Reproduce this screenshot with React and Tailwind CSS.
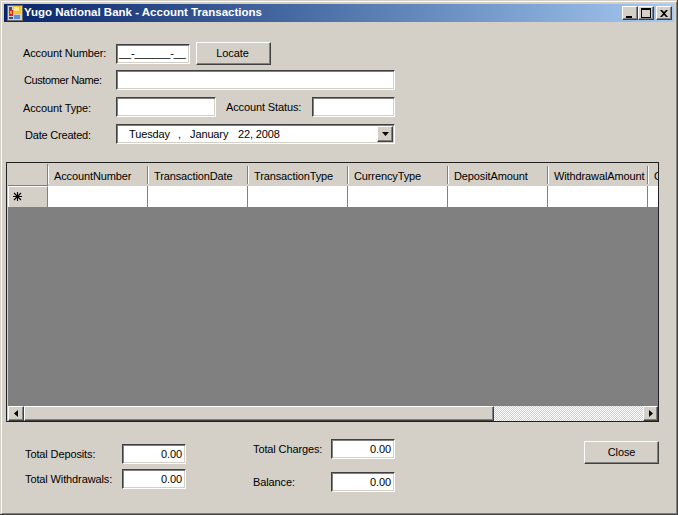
const sans = { fontFamily: '"Liberation Sans", Arial, sans-serif' };

const Field = ({ className = "", children }) => (
  <div className={`h-5 bg-white border border-t-[#404040] border-l-[#404040] border-r-white border-b-white shadow-[inset_1px_1px_0_#808080,inset_-1px_-1px_0_#d4d0c8] flex items-center overflow-hidden ${className}`}>
    {children}
  </div>
);

const Btn = ({ className = "", children }) => (
  <div className={`flex items-center justify-center bg-[#d4d0c8] border border-t-white border-l-white border-r-[#404040] border-b-[#404040] shadow-[inset_-1px_-1px_0_#808080] ${className}`}>
    {children}
  </div>
);

const Amount = ({ className = "" }) => (
  <Field className={`w-16 justify-end pr-[3px] ${className}`}>0.00</Field>
);

const Cap = ({ children }) => (
  <Btn className="w-4 h-[14px] shrink-0">{children}</Btn>
);

const columns = ["AccountNumber", "TransactionDate", "TransactionType", "CurrencyType", "DepositAmount", "WithdrawalAmount"];

export default function App() {
  return (
    <div style={sans} className="w-[678px] h-[515px] text-[11px] tracking-[-0.12px] text-black bg-[#d4d0c8] border-r border-b border-[#404040]">
      <div className="w-full h-full border-t border-l border-t-[#d4d0c8] border-l-[#d4d0c8]">
        <div className="w-full h-full border-t border-l border-white border-r border-b border-r-[#808080] border-b-[#808080] pt-[2px] pl-[2px] pr-[2px] pb-[2px] flex flex-col">
          <div className="h-[18px] shrink-0 flex items-center bg-gradient-to-r from-[#0a246a] to-[#a6caf0] pl-[3px] pr-[2px]">
            <svg width="16" height="16" viewBox="0 0 16 16" className="shrink-0">
              <rect x="0" y="0" width="16" height="16" fill="#d4d0c8" />
              <rect x="0.5" y="0.5" width="15" height="15" fill="none" stroke="#6b6b6b" />
              <rect x="2" y="2" width="3" height="3" fill="#33507f" />
              <rect x="2" y="5" width="4" height="6" fill="#d02a1c" />
              <rect x="3" y="6" width="2" height="3" fill="#f4a020" />
              <rect x="6" y="1" width="8" height="8" fill="#f4c430" />
              <rect x="7" y="2" width="5" height="4" fill="#ffe98a" />
              <rect x="7" y="10" width="6" height="4" fill="#5b8fd8" />
              <rect x="2" y="12" width="4" height="2" fill="#33507f" />
            </svg>
            <span className="ml-[1px] text-white font-bold text-[11.5px] tracking-[0px] whitespace-nowrap">Yugo National Bank - Account Transactions</span>
            <div className="ml-auto flex items-center">
              <Cap>
                <span className="block w-[6px] h-[2px] bg-black mt-[7px] mr-[2px]" />
              </Cap>
              <Cap>
                <span className="block w-[10px] h-[10px] border border-black border-t-2" />
              </Cap>
              <div className="w-[2px]" />
              <Cap>
                <svg width="8" height="7" viewBox="0 0 8 7">
                  <path d="M0 0h2l2 2 2-2h2L5 3.500 8 7H6L4 5 2 7H0l3-3.500z" fill="#000" />
                </svg>
              </Cap>
            </div>
          </div>

          <div className="flex-1 flex flex-col min-h-0">
            <div className="mt-5 h-[23px] flex items-center">
              <div className="w-[112px] pl-[19px]">Account Number:</div>
              <Field className="w-[74px] pl-[2px]"><span className="whitespace-nowrap tracking-[-0.15px]">__-______-__</span></Field>
              <Btn className="ml-[6px] w-[75px] h-[23px] pr-[2px]">Locate</Btn>
            </div>
            <div className="mt-[5px] h-5 flex items-center">
              <div className="w-[112px] pl-5 tracking-[-0.4px]">Customer Name:</div>
              <Field className="w-[279px]" />
            </div>
            <div className="mt-[7px] h-5 flex items-center">
              <div className="w-[112px] pl-[19px] pt-[2px]">Account Type:</div>
              <Field className="w-[100px]" />
              <div className="w-[96px] pl-[10px] pt-[1px]">Account Status:</div>
              <Field className="w-[83px]" />
            </div>
            <div className="mt-[7px] h-5 flex items-center">
              <div className="w-[112px] pl-[21px] pt-[2px] tracking-[-0.2px]">Date Created:</div>
              <Field className="w-[279px] pl-[12px]">
                <span className="w-[49px] pt-[1px]">Tuesday</span>
                <span className="w-3 pt-[1px]">,</span>
                <span className="w-12 pt-[1px]">January</span>
                <span className="whitespace-nowrap pt-[1px]">22, 2008</span>
                <Btn className="ml-auto mr-[1px] w-4 h-4 shrink-0">
                  <svg width="7" height="4" viewBox="0 0 7 4"><path d="M0 0h7L3.500 4z" fill="#000" /></svg>
                </Btn>
              </Field>
            </div>

            <div className="mt-[18px] ml-[2px] w-[653px] h-[260px] border border-[#202020] pt-px pl-px flex flex-col overflow-hidden">
              <div className="h-[22px] flex shrink-0">
                <div className="w-[40px] shrink-0 border-r border-b border-r-[#808080] border-b-[#808080]" />
                {columns.map((c) => (
                  <div key={c} className="w-[100px] shrink-0 flex items-center">
                    <span className="w-px h-[18px] shrink-0 bg-white" />
                    <span className="flex-1 min-w-0 pl-[5px] pt-[2px] whitespace-nowrap">{c}</span>
                    <span className="w-px h-[18px] shrink-0 bg-[#808080]" />
                  </div>
                ))}
                <div className="flex-1 min-w-0 flex items-center overflow-hidden">
                  <span className="w-px h-[18px] shrink-0 bg-white" />
                  <span className="pl-[5px] pt-[2px]">C</span>
                </div>
              </div>
              <div className="h-[21px] flex shrink-0 bg-white">
                <div className="w-[40px] shrink-0 bg-[#d4d0c8] border-t border-l border-t-white border-l-white border-r border-r-[#808080] pl-[4px] pt-[5px]">
                  <svg width="9" height="9" viewBox="0 0 9 9" className="block">
                    <path d="M4.500 0v9M0 4.500h9M1 1l7 7M8 1L1 8" stroke="#000" strokeWidth="1.100" fill="none" />
                  </svg>
                </div>
                {columns.map((c) => (
                  <div key={c} className="w-[100px] shrink-0 border-r border-r-[#808080]" />
                ))}
              </div>
              <div className="flex-1 bg-[#808080]" />
              <div className="h-[15px] flex shrink-0 bg-[repeating-conic-gradient(#d4d0c8_0_25%,#ffffff_0_50%)] bg-[length:2px_2px]">
                <Btn className="w-[16px] shrink-0">
                  <svg width="4" height="7" viewBox="0 0 4 7"><path d="M4 0v7L0 3.500z" fill="#000" /></svg>
                </Btn>
                <Btn className="w-[470px] shrink-0" />
                <Btn className="w-[15px] shrink-0 ml-auto">
                  <svg width="4" height="7" viewBox="0 0 4 7"><path d="M0 0v7l4-3.500z" fill="#000" /></svg>
                </Btn>
              </div>
            </div>

            <div className="flex items-start">
              <div className="mt-[22px] flex flex-col gap-[5px]">
                <div className="flex items-center">
                  <div className="w-[118px] pl-[21px]">Total Deposits:</div>
                  <Amount />
                </div>
                <div className="flex items-center">
                  <div className="w-[118px] pl-[21px]">Total Withdrawals:</div>
                  <Amount />
                </div>
              </div>
              <div className="mt-[17px] ml-[67px] flex flex-col gap-[13px]">
                <div className="flex items-center">
                  <div className="w-[78px]">Total Charges:</div>
                  <Amount />
                </div>
                <div className="flex items-center">
                  <div className="w-[78px] pt-[1px]">Balance:</div>
                  <Amount />
                </div>
              </div>
              <Btn className="mt-[19px] ml-auto mr-[15px] w-[75px] h-[23px]">Close</Btn>
            </div>
          </div>
        </div>
      </div>
    </div>
  );
}
